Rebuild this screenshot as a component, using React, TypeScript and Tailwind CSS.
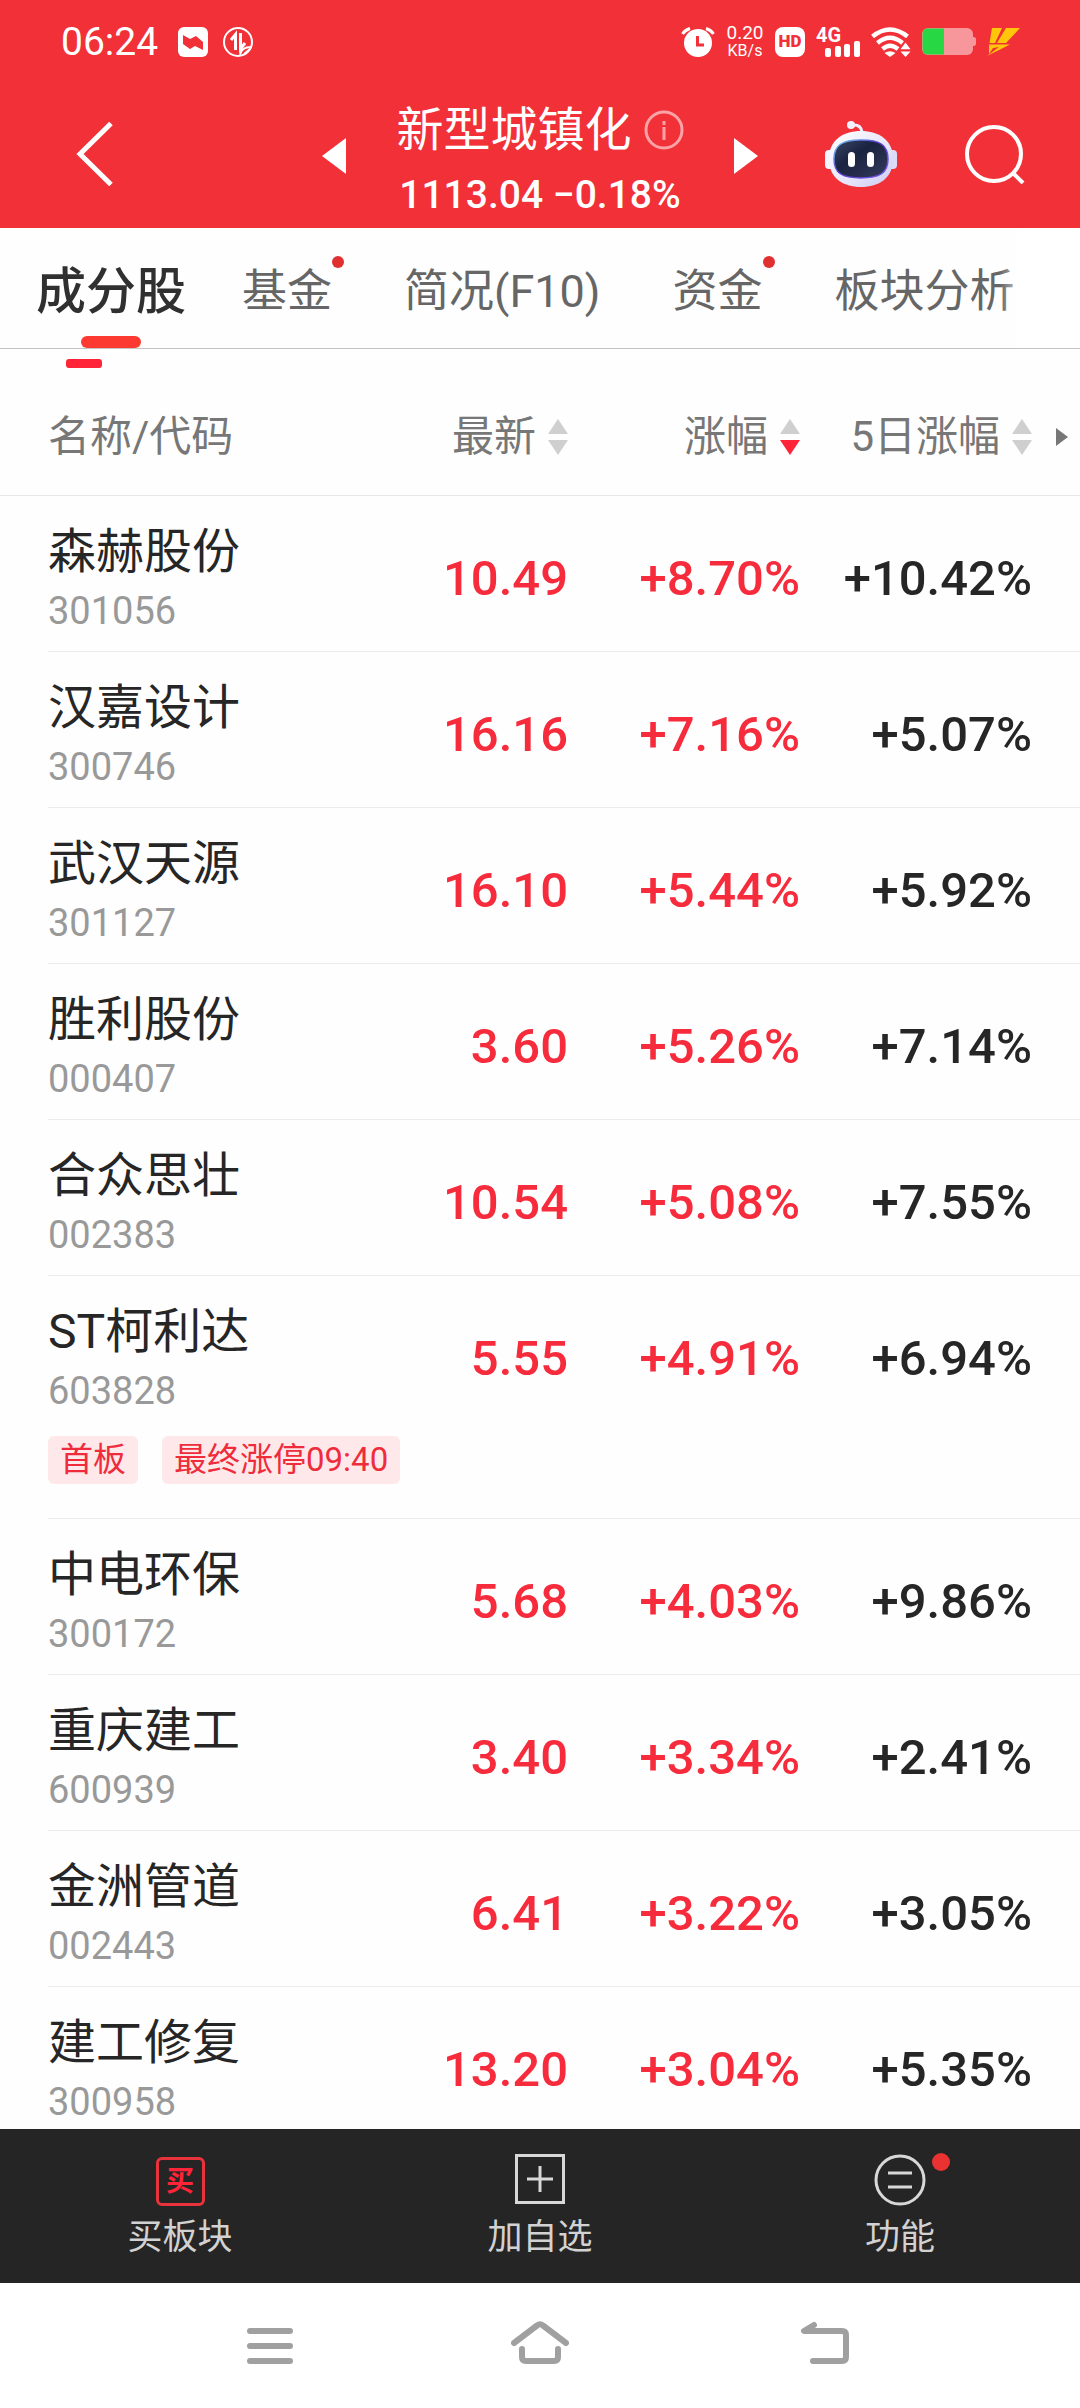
// Constituent stock list of a market sector, phone layout.

const stocks = [
  { name: "森赫股份", code: "301056", price: "10.49", change: "+8.70%", fiveDay: "+10.42%" },
  { name: "汉嘉设计", code: "300746", price: "16.16", change: "+7.16%", fiveDay: "+5.07%" },
  { name: "武汉天源", code: "301127", price: "16.10", change: "+5.44%", fiveDay: "+5.92%" },
  { name: "胜利股份", code: "000407", price: "3.60", change: "+5.26%", fiveDay: "+7.14%" },
  { name: "合众思壮", code: "002383", price: "10.54", change: "+5.08%", fiveDay: "+7.55%" },
  {
    name: "ST柯利达",
    code: "603828",
    price: "5.55",
    change: "+4.91%",
    fiveDay: "+6.94%",
    tags: ["首板", "最终涨停09:40"],
  },
  { name: "中电环保", code: "300172", price: "5.68", change: "+4.03%", fiveDay: "+9.86%" },
  { name: "重庆建工", code: "600939", price: "3.40", change: "+3.34%", fiveDay: "+2.41%" },
  { name: "金洲管道", code: "002443", price: "6.41", change: "+3.22%", fiveDay: "+3.05%" },
  { name: "建工修复", code: "300958", price: "13.20", change: "+3.04%", fiveDay: "+5.35%" },
];

const tabs = [
  { label: "成分股", active: true },
  { label: "基金", dot: true },
  { label: "简况(F10)" },
  { label: "资金", dot: true },
  { label: "板块分析" },
];

function StatusBar() {
  return (
    <div className="flex h-[84px] items-center justify-between pl-[61px] pr-[60px]">
      <div className="flex items-center">
        <span className="text-[39px] leading-[44px]">06:24</span>
        <svg className="ml-5 h-[30px] w-[30px]" viewBox="0 0 30 30" fill="none">
          <rect width="30" height="30" rx="6" fill="#fff" />
          <path d="M5 8l7 4 6-3 7 6v8l-8-4-5 3-7-5z" fill="#f23038" />
        </svg>
        <svg className="ml-[15px] h-[30px] w-[30px]" viewBox="0 0 30 30" fill="none" stroke="#fff">
          <circle cx="15" cy="15" r="14" strokeWidth="2" />
          <path d="M12.5 23V7.500L8 13M17.500 6v16l4.500-6" strokeWidth="3" />
          <path d="M17 28c1-6 5-8 11-8" strokeWidth="2" />
          <path d="M21 27l6-5" strokeWidth="2" />
        </svg>
      </div>
      <div className="flex items-center gap-[11px]">
        <svg className="h-[30px] w-[34px]" viewBox="0 0 34 30" fill="none">
          <circle cx="17" cy="16" r="14" fill="#fff" />
          <path d="M1.500 7Q4 3 9 1.500M32.500 7Q30 3 25 1.500" stroke="#fff" strokeWidth="3" />
          <path d="M16.500 9v9h6.500" stroke="#f23038" strokeWidth="3" />
        </svg>
        <span className="flex w-[38px] flex-col items-center leading-[18px]">
          <span className="text-[19px]">0.20</span>
          <span className="text-[16px]">KB/s</span>
        </span>
        <span className="flex h-[30px] w-[30px] items-center justify-center rounded-lg bg-white text-[17px] font-black text-[#f23038]">
          HD
        </span>
        <span className="relative h-[30px] w-11">
          <span className="absolute left-0 -top-0.5 text-[20px] leading-5 font-bold">4G</span>
          <svg className="h-[30px] w-11" viewBox="0 0 44 30" fill="#fff">
            <rect x="9" y="21" width="6" height="9" rx="2" />
            <rect x="19" y="19" width="6" height="11" rx="2" />
            <rect x="28" y="17" width="6" height="13" rx="2" />
            <rect x="38" y="14" width="6" height="16" rx="2" />
          </svg>
        </span>
        <svg className="h-[30px] w-10" viewBox="0 0 40 30" fill="none" stroke="#fff" strokeWidth="4.500">
          <path d="M1.500 9.500Q19 -4.500 36.500 9.500" />
          <path d="M6.500 16Q19 5.500 31.500 16" />
          <path d="M11.500 22Q19 15.500 27 22" />
          <path d="M13.500 26q5.500-3.500 11 0L19 30z" fill="#fff" stroke="none" />
          <path d="M29.500 22.200L34.500 15.500l5 6.700zM29.500 24.500h10l-5 5.500z" fill="#fff" stroke="none" />
        </svg>
        <svg className="h-7 w-[54px]" viewBox="0 0 54 28">
          <path d="M50 9h1.500Q54 9 54 11v5q0 2-2.500 2H50z" fill="#f8979b" />
          <rect width="51" height="27" rx="6" fill="#f8979b" />
          <path d="M6 .500h16v26H6q-5.500 0-5.500-5.500V6Q.500.500 6 .500z" fill="#27d844" />
        </svg>
        <svg className="h-7 w-[33px]" viewBox="0 0 33 28" fill="#ffc60a">
          <path d="M5 0h10L8 15H2.500z" />
          <path d="M19 0h14L19 15h-9z" />
          <path d="M2 16.500h21L0 28l12-9-6 1-4 6z" />
        </svg>
      </div>
    </div>
  );
}

function RobotIcon() {
  return (
    <svg className="h-[66px] w-[72px]" viewBox="0 0 72 66" fill="none">
      <defs>
        <linearGradient id="shell" x1="0" y1="0" x2="1" y2="1">
          <stop offset="0" stopColor="#ffffff" />
          <stop offset="0.600" stopColor="#e6e5fa" />
          <stop offset="1" stopColor="#cbcaf2" />
        </linearGradient>
        <linearGradient id="rim" x1="0" y1="0" x2="1" y2="1">
          <stop offset="0" stopColor="#6fd3ee" />
          <stop offset="0.450" stopColor="#5a3bd0" />
          <stop offset="1" stopColor="#7a5cf0" />
        </linearGradient>
        <linearGradient id="visor" x1="0" y1="0" x2="1" y2="1">
          <stop offset="0" stopColor="#3a4668" />
          <stop offset="0.400" stopColor="#1a2340" />
          <stop offset="1" stopColor="#363b5c" />
        </linearGradient>
      </defs>
      <path d="M27 4q9-1 10 7" stroke="#eeeefc" strokeWidth="3" />
      <circle cx="26" cy="4" r="4" fill="#f2f2fd" />
      <rect x="0" y="29" width="10" height="19" rx="4" fill="#f4f4fe" />
      <rect x="62" y="29" width="10" height="19" rx="4" fill="#dcdcf8" />
      <path
        d="M36 10c18 0 32 9 32 28S54 66 36 66 4 57 4 38s14-28 32-28z"
        fill="url(#shell)"
      />
      <path
        d="M36 19c19 0 27 5 27 19s-8 19-27 19S9 52 9 38s8-19 27-19z"
        fill="url(#visor)"
        stroke="url(#rim)"
        strokeWidth="1.500"
      />
      <rect x="23" y="31" width="7" height="15" rx="3.500" fill="#fff" />
      <rect x="42" y="31" width="7" height="15" rx="3.500" fill="#fff" />
    </svg>
  );
}

function TitleBar() {
  return (
    <div className="grid h-36 grid-cols-[1fr_436px_1fr]">
      <div className="flex items-center pb-1 pl-[76px]">
        <button aria-label="返回">
          <svg className="h-16 w-[38px]" viewBox="0 0 38 64" fill="none" stroke="#fff" strokeWidth="5">
            <path d="M35 1.500L4 32l31 30.500" />
          </svg>
        </button>
      </div>
      <div className="flex items-center justify-between">
        <button aria-label="上一个">
          <svg className="h-9 w-6" viewBox="0 0 24 36" fill="#fff">
            <path d="M24 0v36L0 18z" />
          </svg>
        </button>
        <div className="flex flex-col items-center pt-3">
          <div className="flex items-center gap-3">
            <h1 className="text-[47px] leading-[66px]">新型城镇化</h1>
            <button aria-label="说明">
              <svg className="h-10 w-10" viewBox="0 0 40 40" fill="none" stroke="#faa3a7" strokeWidth="3">
                <circle cx="20" cy="20" r="18" />
                <path d="M20 17v13M20 11v4" />
              </svg>
            </button>
          </div>
          <p className="text-[39px] leading-[64px] font-medium">1113.04 −0.18%</p>
        </div>
        <button aria-label="下一个">
          <svg className="h-9 w-6" viewBox="0 0 24 36" fill="#fff">
            <path d="M0 0v36l24-18z" />
          </svg>
        </button>
      </div>
      <div className="flex items-center justify-between pb-1 pl-[67px] pr-[55px]">
        <button aria-label="智能助手">
          <RobotIcon />
        </button>
        <button aria-label="搜索">
          <svg className="h-[60px] w-[60px]" viewBox="0 0 60 60" fill="none" stroke="#fff" strokeWidth="4">
            <circle cx="29" cy="30" r="27" />
            <path d="M48 49l10 10" />
          </svg>
        </button>
      </div>
    </div>
  );
}

function Tabs() {
  return (
    <nav className="relative flex h-[121px] shrink-0 gap-[72px] border-b border-[#c4c4c4] pl-9 whitespace-nowrap">
      {tabs.map((tab) =>
        tab.active ? (
          <button key={tab.label} className="relative -mr-4 pt-2 text-[50px] font-medium text-[#303030]">
            {tab.label}
            <span className="absolute bottom-0 left-[45px] h-3 w-[60px] rounded-full bg-[#fc3a32]" />
            <span className="absolute -bottom-5 left-[30px] h-[9px] w-9 rounded-[3px] bg-[#ff2437]" />
          </button>
        ) : (
          <button key={tab.label} className="relative pt-2 text-[45px] text-[#666]">
            {tab.label}
            {tab.dot && (
              <span className="absolute top-7 -right-3 h-3 w-3 rounded-full bg-[#e03030]" />
            )}
          </button>
        ),
      )}
      <span className="absolute right-0 top-0 h-full w-20 bg-gradient-to-l from-white from-60% to-transparent" />
    </nav>
  );
}

function SortArrows({ desc }: { desc?: boolean }) {
  return (
    <svg className="h-9 w-5" viewBox="0 0 20 36" fill="#cfcfcf">
      <path d="M10 0l10 15H0z" />
      <path d="M0 21h20L10 36z" fill={desc ? "#ff2437" : "#cfcfcf"} />
    </svg>
  );
}

function StockTable() {
  return (
    <table className="w-full border-separate border-spacing-0">
      <thead className="text-[42px] leading-[60px] text-[#777]">
        <tr className="[&>th]:h-[147px] [&>th]:border-b [&>th]:border-[#e8e8e8] [&>th]:pt-[30px] [&>th]:font-normal">
          <th className="relative text-left before:absolute before:-bottom-px before:-left-12 before:h-px before:w-12 before:bg-[#e8e8e8]">
            名称/代码
          </th>
          <th className="w-40">
            <button className="flex w-full items-center justify-end gap-3">
              最新
              <SortArrows />
            </button>
          </th>
          <th className="w-[232px]">
            <button className="flex w-full items-center justify-end gap-3">
              涨幅
              <SortArrows desc />
            </button>
          </th>
          <th className="w-[280px]">
            <div className="flex items-center justify-end gap-6 pr-3">
              <button className="flex items-center gap-3 whitespace-nowrap">
                5日涨幅
                <SortArrows />
              </button>
              <svg className="h-[18px] w-3" viewBox="0 0 12 18" fill="#777">
                <path d="M0 0v18l12-9z" />
              </svg>
            </div>
          </th>
        </tr>
      </thead>
      <tbody className="[&_td]:border-b [&_td]:border-[#ebebeb] [&_td]:align-top">
        {stocks.map((stock) => (
          <tr key={stock.code} className="text-right text-[49px] leading-[60px] font-medium text-[#f62b3c]">
            <td className="h-[156px] pt-7 text-left font-normal">
              <div className="text-[48px] leading-[56px] text-[#262626]">{stock.name}</div>
              <div className="mt-[10px] text-[38px] leading-[42px] text-[#999]">{stock.code}</div>
              {stock.tags && (
                <div className="mt-6 mb-[34px] flex gap-6 whitespace-nowrap">
                  {stock.tags.map((tag) => (
                    <span
                      key={tag}
                      className="rounded-md bg-[#ffe8ea] px-3 text-[33px] leading-[48px] text-[#ee2c3c]"
                    >
                      {tag}
                    </span>
                  ))}
                </div>
              )}
            </td>
            <td className="pt-[53px]">{stock.price}</td>
            <td className="pt-[53px]">{stock.change}</td>
            <td className="pt-[53px] pr-12 text-[#262626]">{stock.fiveDay}</td>
          </tr>
        ))}
      </tbody>
    </table>
  );
}

function ActionBar() {
  return (
    <div className="grid h-[154px] shrink-0 grid-cols-3 bg-[#252525] pt-[25px] text-[35px] leading-[44px] text-[#d2d2d2]">
      <button className="flex flex-col items-center gap-[10px]">
        <span className="flex h-[52px] items-end">
          <span className="flex h-[49px] w-[49px] items-center justify-center rounded-[6px] border-3 border-[#e8333c] text-[28px] leading-7 font-bold text-[#ff2437]">
            买
          </span>
        </span>
        买板块
      </button>
      <button className="flex flex-col items-center gap-[10px]">
        <svg className="h-[52px] w-[52px]" viewBox="0 0 52 52" fill="none" stroke="#d8d8d8" strokeWidth="3">
          <path d="M2.500 1.500h47v47h-47zM26 12v26M13 25h26" />
        </svg>
        加自选
      </button>
      <button className="flex flex-col items-center gap-[10px]">
        <span className="relative">
          <svg className="h-[52px] w-[52px]" viewBox="0 0 52 52" fill="none" stroke="#d8d8d8" strokeWidth="3">
            <circle cx="26" cy="26" r="24" />
            <path d="M14 19h24M14 33h24" />
          </svg>
          <span className="absolute -right-6 -top-px h-[18px] w-[18px] rounded-full bg-[#ea3232]" />
        </span>
        功能
      </button>
    </div>
  );
}

function SystemNav() {
  return (
    <div className="grid h-[125px] shrink-0 grid-cols-3 items-center justify-items-center bg-white px-[135px] pb-1.5">
      <button aria-label="最近任务">
        <svg className="h-11 w-[46px]" viewBox="0 0 46 44" fill="none" stroke="#a0a0a0" strokeWidth="6" strokeLinecap="round">
          <path d="M3 10h40M3 25h40M3 40h40" />
        </svg>
      </button>
      <button aria-label="主页">
        <svg className="h-11 w-[58px]" viewBox="0 0 58 44" fill="none" stroke="#a0a0a0" strokeWidth="6" strokeLinecap="round" strokeLinejoin="round">
          <path d="M3 22L26 4.500Q29 2 32 4.500L55 22M11 28v8q0 4 4 4h28q4 0 4-4v-8" />
        </svg>
      </button>
      <button aria-label="返回上级">
        <svg className="h-11 w-[78px]" viewBox="-30 0 78 44" fill="none" stroke="#a0a0a0" strokeWidth="6" strokeLinecap="round" strokeLinejoin="round">
          <path d="M13 4L3 10h38q4 0 4 4v22q0 4-4 4H12" />
        </svg>
      </button>
    </div>
  );
}

export default function App() {
  return (
    <div className="flex h-screen flex-col bg-[#fefefe] font-[Roboto,'Noto_Sans_CJK_SC',sans-serif]">
      <header className="shrink-0 bg-[#f23038] text-white">
        <StatusBar />
        <TitleBar />
      </header>
      <Tabs />
      <main className="min-h-0 flex-1 overflow-y-auto pl-12 [scrollbar-width:none]">
        <StockTable />
      </main>
      <ActionBar />
      <SystemNav />
    </div>
  );
}
